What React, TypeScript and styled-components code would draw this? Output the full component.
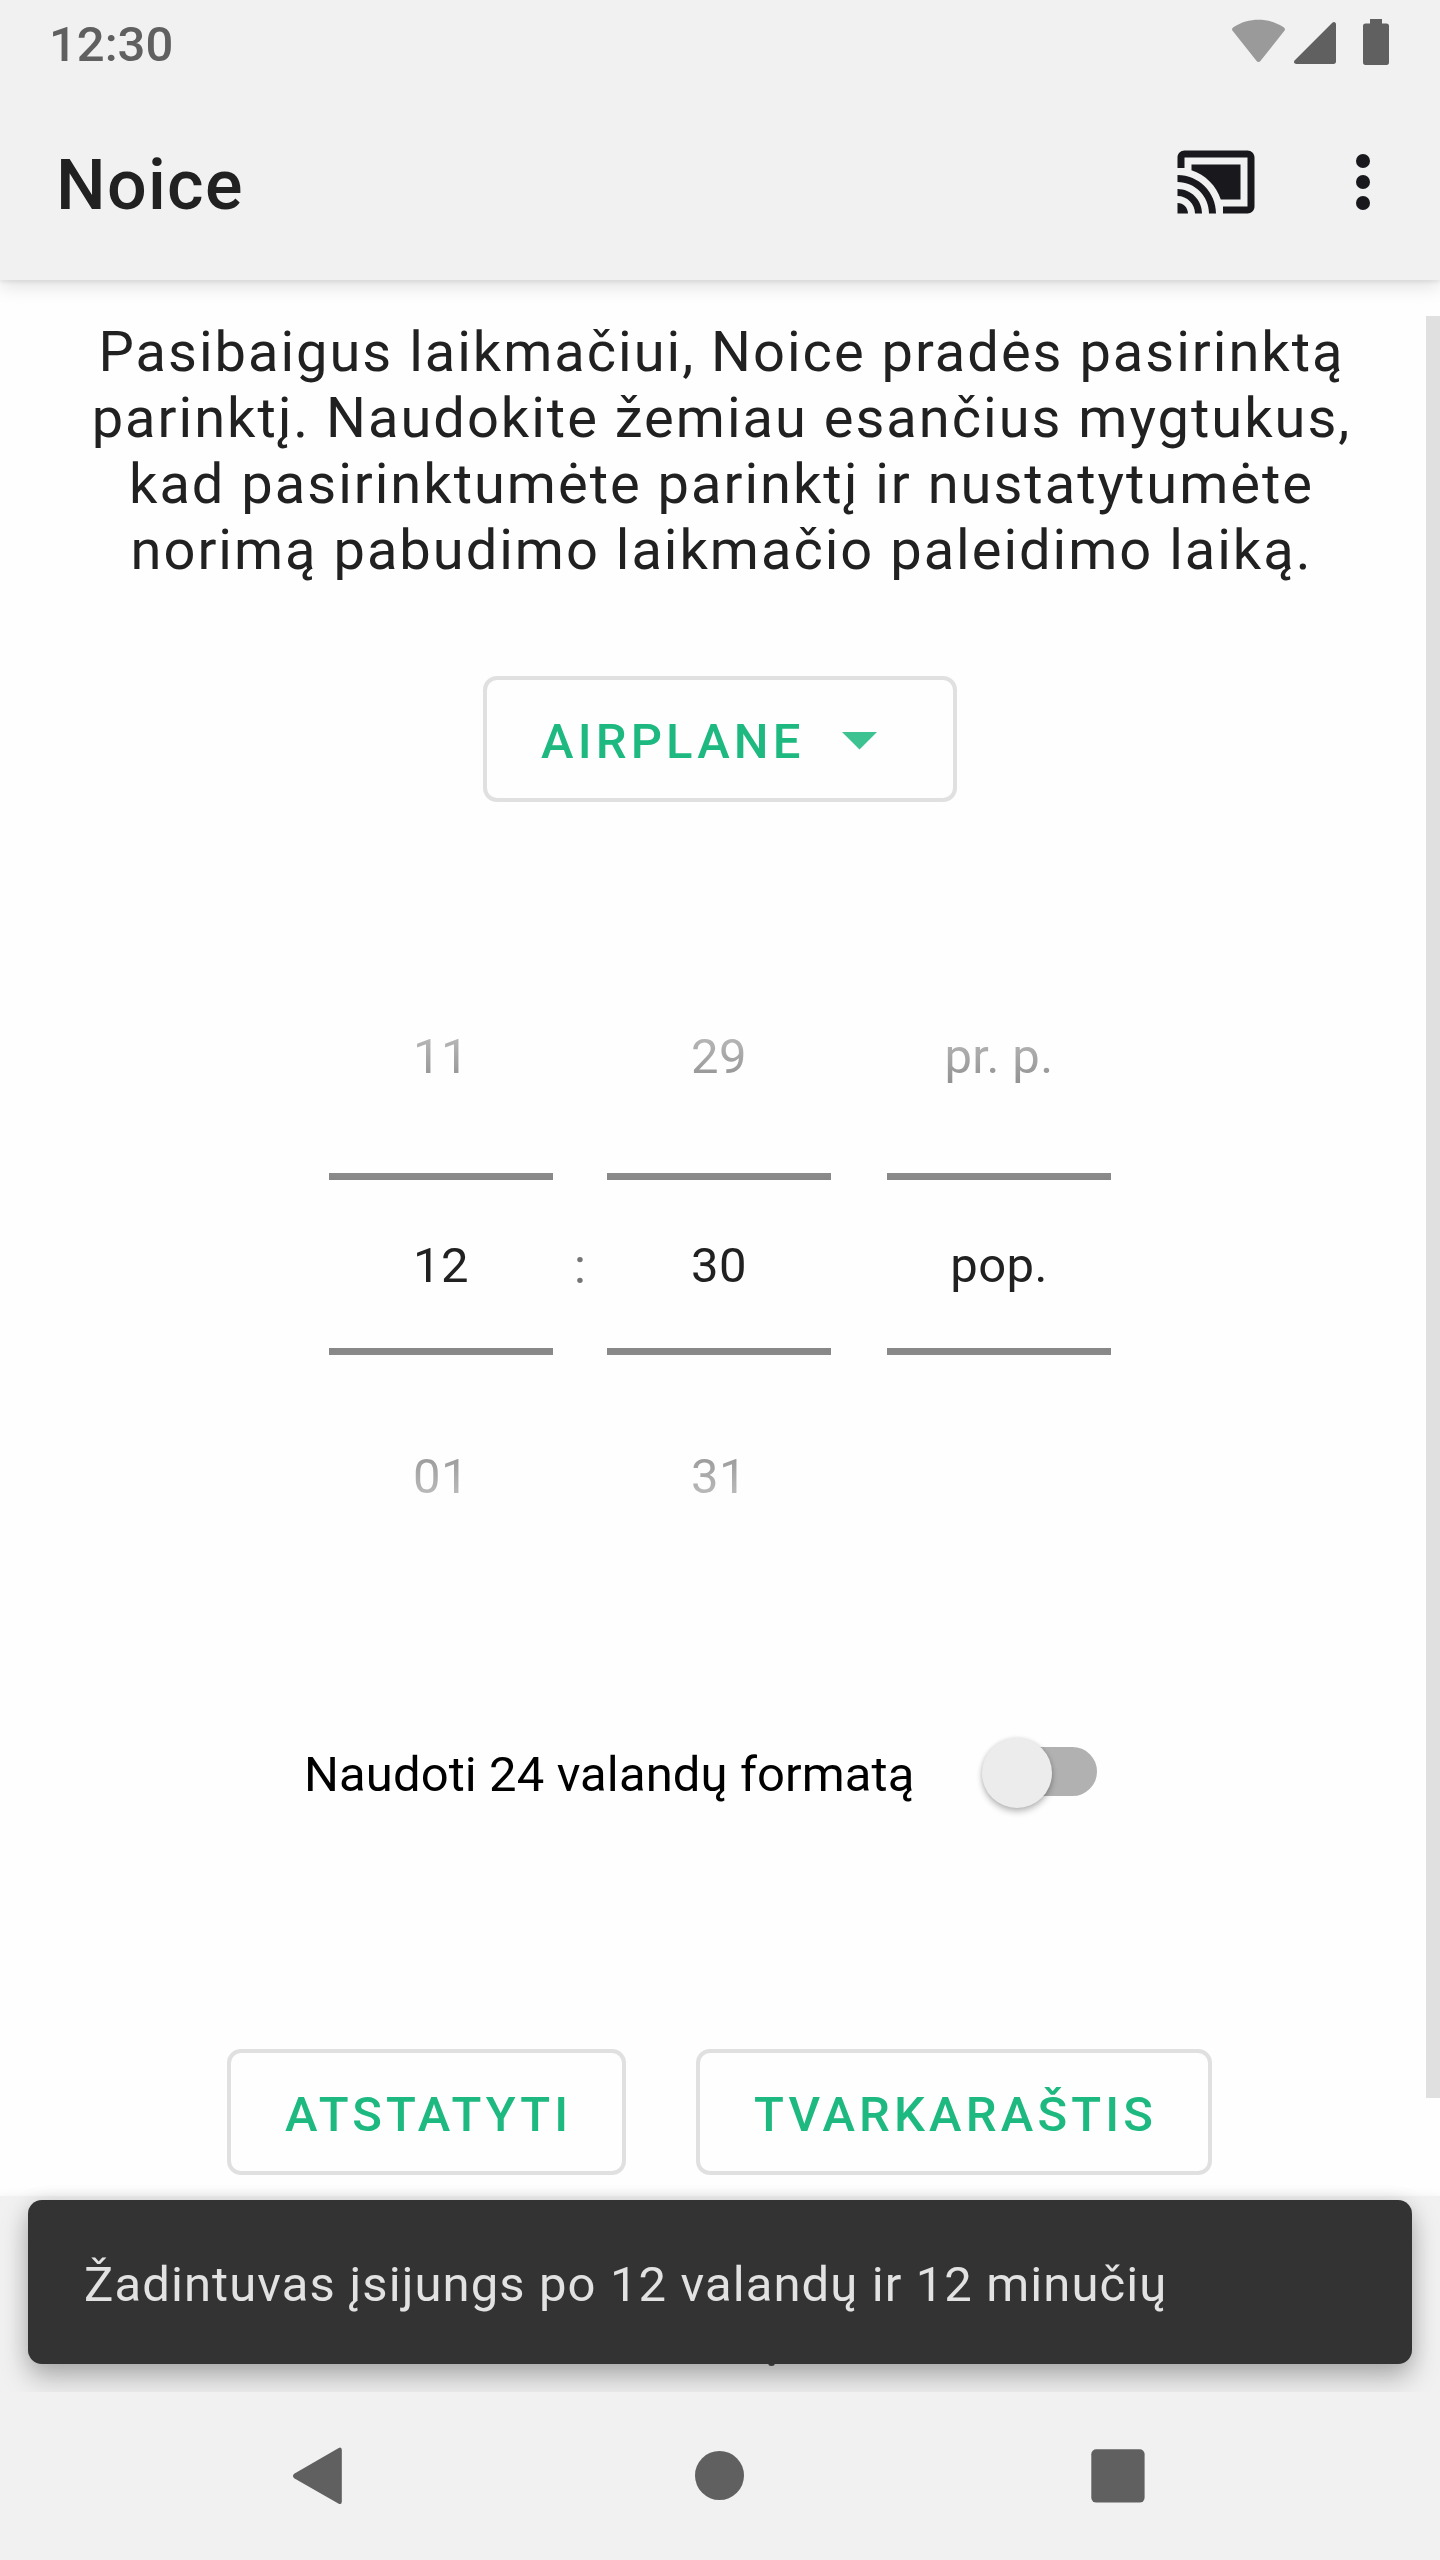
import React from "react";
import styled, { createGlobalStyle } from "styled-components";

const GlobalStyle = createGlobalStyle`
  *, *::before, *::after { box-sizing: border-box; }
  body { margin: 0; background: #f1f1f1; }
`;

const Screen = styled.div`
  width: 1440px;
  height: 2560px;
  display: flex;
  flex-direction: column;
  overflow: hidden;
  background: #f1f1f1;
  color: #212121;
  font-family: Roboto, "Noto Sans", sans-serif;
  font-size: 49px;
  line-height: 58px;
`;

const StatusBar = styled.header`
  flex: none;
  position: relative;
  z-index: 2;
  height: 84px;
  display: flex;
  justify-content: space-between;
  padding: 0 51px 0 49px;
  background: #f1f1f1;
  color: #606060;
`;

const Clock = styled.span`
  padding-top: 16px;
  font-weight: 500;
`;

const StatusIcons = styled.div`
  display: flex;
  align-items: flex-start;
  height: 65px;
  padding-top: 15px;
`;

const AppBar = styled.div`
  flex: none;
  position: relative;
  z-index: 1;
  height: 196px;
  display: flex;
  align-items: center;
  justify-content: space-between;
  padding: 0 35px 0 56px;
  background: #f1f1f1;
  box-shadow: 0 6px 18px rgba(0, 0, 0, 0.12), 0 2px 4px rgba(0, 0, 0, 0.07);
`;

const Title = styled.h1`
  margin: 0;
  padding-top: 6px;
  font-size: 70px;
  font-weight: 500;
  line-height: 82px;
  letter-spacing: 1.3px;
`;

const Actions = styled.div`
  display: flex;
  gap: 63px;
  color: #18181d;
  svg { display: block; fill: currentColor; }
`;

const Content = styled.main`
  flex: none;
  position: relative;
  height: 1916px;
  display: flex;
  flex-direction: column;
  align-items: center;
  padding-top: 39px;
  background: #fefefe;
`;

const ScrollThumb = styled.div`
  position: absolute;
  top: 36px;
  right: 0;
  width: 14px;
  height: 1782px;
  background: #e0e0e0;
`;

const Intro = styled.p`
  margin: 0;
  padding-left: 3px;
  font-size: 56px;
  line-height: 66px;
  letter-spacing: 2px;
  text-align: center;
  white-space: nowrap;
`;

const OutlinedButton = styled.button<{ $width: number }>`
  width: ${(p) => p.$width}px;
  height: 126px;
  display: flex;
  align-items: center;
  padding: 5px 0 0 54px;
  border: 4px solid #e0e0e0;
  border-radius: 14px;
  background: transparent;
  color: #1eb980;
  font: 500 49px/58px Roboto, "Noto Sans", sans-serif;
  letter-spacing: 4.15px;
  white-space: nowrap;
`;

const Caret = styled.svg`
  margin: -1px 0 0 37px;
  fill: #3dc392;
`;

const SoundSlot = styled.div`
  margin-top: 93px;
`;

const TimePicker = styled.div`
  display: flex;
  margin-top: 147px;
  height: 630px;
`;

const Wheel = styled.div`
  width: 224px;
  display: flex;
  flex-direction: column;
  align-items: center;
  padding-top: 79px;
  letter-spacing: 0.4px;
  mask-image: linear-gradient(to bottom, transparent 0, #000 275px, #000 355px, transparent 630px);
`;

const WheelValue = styled.div`
  height: 58px;
  text-align: center;
  white-space: nowrap;
`;

const Selected = styled.div`
  width: 224px;
  height: 182px;
  margin: 87px 0 93px;
  padding-top: 57px;
  border: solid #707070;
  border-width: 7px 0;
  text-align: center;
`;

const Separator = styled.div<{ $width: number }>`
  width: ${(p) => p.$width}px;
  padding-top: 289px;
  text-align: center;
  color: #757575;
`;

const FormatRow = styled.label`
  display: flex;
  align-items: center;
  margin-top: 158px;
  margin-right: 40px;
  height: 70px;
  color: #000;
`;

const FormatText = styled.span`
  width: 682px;
  padding: 6px 0 0 1px;
  letter-spacing: 0.1px;
  white-space: nowrap;
`;

const Track = styled.span`
  display: flex;
  align-items: center;
  width: 112px;
  height: 49px;
  margin-bottom: 1px;
  border-radius: 25px;
  background: #b1b1b1;
`;

const Thumb = styled.span`
  flex: none;
  width: 70px;
  height: 70px;
  margin: 2px 0 0 -3px;
  border-radius: 50%;
  background: #ececec;
  box-shadow: 0 4px 6px rgba(0, 0, 0, 0.24), 0 0 4px rgba(0, 0, 0, 0.12);
`;

const ButtonRow = styled.div`
  display: flex;
  gap: 70px;
  margin-top: 242px;
  margin-right: 1px;
`;

const BottomBar = styled.div`
  flex: none;
  position: relative;
  height: 196px;
  padding: 4px 28px 28px;
  background: #f1f1f1;
  box-shadow: 0 0 10px rgba(0, 0, 0, 0.06);
`;

const LabelTail = styled.span`
  position: absolute;
  left: 768px;
  top: 164px;
  width: 7px;
  height: 6px;
  border-radius: 0 0 4px 4px;
  background: #4a4a4a;
`;

const Snackbar = styled.div`
  position: relative;
  height: 164px;
  display: flex;
  align-items: center;
  padding: 5px 56px 0;
  border-radius: 14px;
  background: #333333;
  color: #e2e2e2;
  letter-spacing: 1.1px;
  white-space: nowrap;
  box-shadow: 0 14px 28px rgba(0, 0, 0, 0.26), 0 2px 20px rgba(0, 0, 0, 0.1);
`;

const SystemNav = styled.nav`
  flex: none;
  position: relative;
  height: 168px;
  display: flex;
  justify-content: space-between;
  padding: 42px 280px 0 279px;
  background: #f1f1f1;
  svg { display: block; fill: #606060; }
`;

function Column({ values }: { values: [string, string, string] }) {
  return (
    <Wheel>
      <WheelValue>{values[0]}</WheelValue>
      <Selected>{values[1]}</Selected>
      <WheelValue>{values[2]}</WheelValue>
    </Wheel>
  );
}

export default function App() {
  return (
    <>
      <GlobalStyle />
      <Screen>
        <StatusBar>
          <Clock>12:30</Clock>
          <StatusIcons>
            <svg width="157" height="50" viewBox="1232 15 157 50">
              <path
                fill="#9a9a9a"
                d="M1233.2 31.600C1231.600 30 1231.600 28.400 1233.400 27.200C1241 22 1250 19.700 1258.500 19.700C1267 19.700 1276 22 1283.600 27.200C1285.400 28.400 1285.400 30 1283.800 31.600L1260.600 60.800C1259.400 62.400 1257.600 62.400 1256.400 60.800Z"
              />
              <path
                fill="#606060"
                d="M1332.300 22.800C1333.800 21.300 1336 22.200 1336 24.400V61.500C1336 63 1335 64 1333.500 64H1296.400C1294 64 1293.300 61.800 1294.800 60.300Z"
              />
              <path
                fill="#606060"
                d="M1370 19H1382V23.500H1386.500Q1389 23.500 1389 26V62.300Q1389 65 1386.500 65H1365.500Q1363 65 1363 62.300V26Q1363 23.500 1365.500 23.500H1370Z"
              />
            </svg>
          </StatusIcons>
        </StatusBar>

        <AppBar>
          <Title>Noice</Title>
          <Actions>
            <svg width="84" height="84" viewBox="0 0 24 24">
              <path d="M1 18v3h3c0-1.66-1.34-3-3-3zm0-4v2c2.76 0 5 2.24 5 5h2c0-3.870-3.130-7-7-7zm18-7H5v1.630c3.960 1.280 7.090 4.410 8.370 8.370H19V7zM1 10v2c4.970 0 9 4.030 9 9h2c0-6.080-4.930-11-11-11zm20-7H3c-1.100 0-2 .9-2 2v3h2V5h18v14h-7v2h7c1.100 0 2-.9 2-2V5c0-1.100-.9-2-2-2z" />
            </svg>
            <svg width="84" height="84" viewBox="0 0 24 24">
              <circle cx="12" cy="6" r="2" />
              <circle cx="12" cy="12" r="2" />
              <circle cx="12" cy="18" r="2" />
            </svg>
          </Actions>
        </AppBar>

        <Content>
          <Intro>
            Pasibaigus laikmačiui, Noice pradės pasirinktą
            <br />
            parinktį. Naudokite žemiau esančius mygtukus,
            <br />
            kad pasirinktumėte parinktį ir nustatytumėte
            <br />
            norimą pabudimo laikmačio paleidimo laiką.
          </Intro>

          <SoundSlot>
            <OutlinedButton $width={474}>
              AIRPLANE
              <Caret width="35" height="18" viewBox="0 0 35 18">
                <path d="M0 0H35L17.500 17.500Z" />
              </Caret>
            </OutlinedButton>
          </SoundSlot>

          <TimePicker>
            <Column values={["11", "12", "01"]} />
            <Separator $width={54}>:</Separator>
            <Column values={["29", "30", "31"]} />
            <Separator $width={56} />
            <Column values={["pr. p.", "pop.", ""]} />
          </TimePicker>

          <FormatRow>
            <FormatText>Naudoti 24 valandų formatą</FormatText>
            <Track>
              <Thumb />
            </Track>
          </FormatRow>

          <ButtonRow>
            <OutlinedButton $width={399}>ATSTATYTI</OutlinedButton>
            <OutlinedButton $width={516}>TVARKARAŠTIS</OutlinedButton>
          </ButtonRow>
          <ScrollThumb />
        </Content>

        <BottomBar>
          <LabelTail />
          <Snackbar>Žadintuvas įsijungs po 12 valandų ir 12 minučių</Snackbar>
        </BottomBar>

        <SystemNav>
          <svg width="84" height="84" viewBox="279 2434 84 84">
            <path d="M338.300 2448.200Q341.800 2446.400 341.800 2450.200V2501.500Q341.800 2505.400 338.300 2503.500L294.600 2478.400Q291.200 2475.900 294.600 2473.400Z" />
          </svg>
          <svg width="84" height="84" viewBox="678 2434 84 84">
            <circle cx="719.500" cy="2475.500" r="24.500" />
          </svg>
          <svg width="84" height="84" viewBox="1076 2434 84 84">
            <rect x="1091.300" y="2449.300" width="53.300" height="53.300" rx="5" />
          </svg>
        </SystemNav>
      </Screen>
    </>
  );
}
